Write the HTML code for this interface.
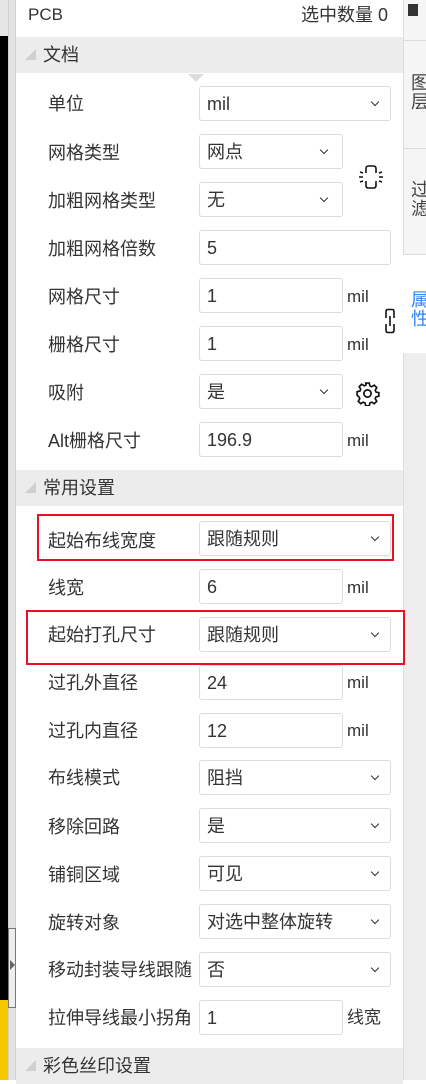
<!DOCTYPE html>
<html><head><meta charset="utf-8"><style>
*{margin:0;padding:0;box-sizing:border-box}
body{width:426px;height:1080px;overflow:hidden;background:#fff;font-family:"Liberation Sans","Noto Sans CJK SC",sans-serif;color:#333;font-size:18px;position:relative}
.a{position:absolute}
.lbl{position:absolute;left:48px;line-height:22px;white-space:nowrap}
.box{position:absolute;left:199px;height:35px;border:1px solid #dcdcdc;border-radius:3px;background:#fff;padding-left:7px;line-height:35px;white-space:nowrap}
.full{width:192px}.short{width:144px}
.chev{position:absolute;right:12px;top:12px;width:6px;height:6px;border-right:1.5px solid #333;border-bottom:1.5px solid #333;transform:rotate(45deg)}
.short .chev{right:15px}
.unit{position:absolute;left:347px;line-height:22px;font-size:17px}
.sec{position:absolute;left:16px;width:387px;height:36px;background:#ececec;line-height:36px;padding-left:27px}
.tri{position:absolute;left:9px;top:12px;width:0;height:0;border-left:11px solid transparent;border-bottom:11px solid #d0d0d0}
</style></head><body>
<div class="a" style="left:0;top:0;width:8px;height:36px;background:#e6e6e6"></div>
<div class="a" style="left:0;top:36px;width:8px;height:964px;background:#000"></div>
<div class="a" style="left:0;top:1000px;width:8px;height:80px;background:#f6c800"></div>
<div class="a" style="left:8px;top:0;width:8px;height:1080px;background:#e4e4e4;border-left:1px solid #d0d0d0;border-right:1px solid #d0d0d0"></div>
<div class="a" style="left:8px;top:928px;width:8px;height:80px;border:1px solid #777;background:#eee"></div>
<div class="a" style="left:10px;top:960px;width:0;height:0;border-top:5px solid transparent;border-bottom:5px solid transparent;border-left:5px solid #666"></div>
<div class="a" style="left:403px;top:0;width:23px;height:255px;background:#f5f5f5;border-left:1px solid #ddd;border-bottom:1px solid #ddd"></div>
<div class="a" style="left:403px;top:40px;width:23px;height:1px;background:#ddd"></div>
<div class="a" style="left:403px;top:148px;width:23px;height:1px;background:#ddd"></div>
<div class="a" style="left:408px;top:4px;width:10px;height:12px;background:#333"></div>
<div class="a" style="left:411px;top:74px;font-size:18px;line-height:19px;color:#444">图<br>层</div>
<div class="a" style="left:411px;top:181px;font-size:18px;line-height:19px;color:#444">过<br>滤</div>
<div class="a" style="left:411px;top:291px;font-size:18px;line-height:19px;color:#2f86f6">属<br>性</div>
<div class="a" style="left:403px;top:353px;width:23px;height:727px;background:#eee;border-left:1px solid #ddd"></div>
<div class="a" style="left:28px;top:4px;line-height:22px;font-size:17px">PCB</div>
<div class="a" style="left:301px;top:4px;line-height:22px">选中数量 0</div>
<div class="sec" style="top:37px"><div class="tri"></div>文档</div>
<div class="a" style="left:188px;top:74px;width:0;height:0;border-left:8px solid transparent;border-right:8px solid transparent;border-top:8px solid #ddd"></div>

<div class="lbl" style="top:93px">单位</div><div class="box full" style="top:86px">mil<i class="chev"></i></div>
<div class="lbl" style="top:142px">网格类型</div><div class="box short" style="top:134px">网点<i class="chev"></i></div>
<div class="lbl" style="top:190px">加粗网格类型</div><div class="box short" style="top:182px">无<i class="chev"></i></div>
<div class="lbl" style="top:238px">加粗网格倍数</div><div class="box full" style="top:230px">5</div>
<div class="lbl" style="top:286px">网格尺寸</div><div class="box short" style="top:278px">1</div><div class="unit" style="top:286px">mil</div>
<div class="lbl" style="top:334px">栅格尺寸</div><div class="box short" style="top:326px">1</div><div class="unit" style="top:334px">mil</div>
<div class="lbl" style="top:382px">吸附</div><div class="box short" style="top:374px">是<i class="chev"></i></div>
<div class="lbl" style="top:430px">Alt栅格尺寸</div><div class="box short" style="top:422px">196.9</div><div class="unit" style="top:430px">mil</div>

<svg class="a" style="left:358px;top:164px" width="26" height="26" viewBox="0 0 26 26" fill="none" stroke="#111" stroke-width="1.6">
<path d="M8 9V4.5Q8 2 10.5 2H15.5Q18 2 18 4.5V9"/><path d="M8 17V21.5Q8 24 10.5 24H15.5Q18 24 18 21.5V17"/>
<path d="M2 8L5 9M1 13H5M2 18L5 17M24 8L21 9M25 13H21M24 18L21 17"/></svg>
<svg class="a" style="left:383px;top:308px" width="14" height="26" viewBox="0 0 14 26" fill="none" stroke="#111" stroke-width="1.6">
<path d="M3 10V3.5Q3 1.5 5 1.5H9Q11 1.5 11 3.5V10"/><path d="M3 16V22.5Q3 24.5 5 24.5H9Q11 24.5 11 22.5V16"/><path d="M7 8V18"/></svg>
<svg class="a" style="left:355px;top:381px" width="25" height="25" viewBox="0 0 24 24" fill="none" stroke="#111" stroke-width="1.6">
<circle cx="12" cy="12" r="3.5"/>
<path d="M10.3 2h3.4l.6 2.7 1.8.8 2.4-1.5 2.4 2.4-1.5 2.4.8 1.8 2.7.6v3.4l-2.7.6-.8 1.8 1.5 2.4-2.4 2.4-2.4-1.5-1.8.8-.6 2.7h-3.4l-.6-2.7-1.8-.8-2.4 1.5-2.4-2.4 1.5-2.4-.8-1.8L2 13.7v-3.4l2.7-.6.8-1.8-1.5-2.4 2.4-2.4 2.4 1.5 1.8-.8z"/></svg>

<div class="sec" style="top:470px"><div class="tri"></div>常用设置</div>
<div class="lbl" style="top:530px">起始布线宽度</div><div class="box full" style="top:521px">跟随规则<i class="chev"></i></div>
<div class="lbl" style="top:577px">线宽</div><div class="box short" style="top:569px">6</div><div class="unit" style="top:577px">mil</div>
<div class="lbl" style="top:624px">起始打孔尺寸</div><div class="box full" style="top:617px">跟随规则<i class="chev"></i></div>
<div class="lbl" style="top:672px">过孔外直径</div><div class="box short" style="top:665px">24</div><div class="unit" style="top:672px">mil</div>
<div class="lbl" style="top:720px">过孔内直径</div><div class="box short" style="top:713px">12</div><div class="unit" style="top:720px">mil</div>
<div class="lbl" style="top:767px">布线模式</div><div class="box full" style="top:760px">阻挡<i class="chev"></i></div>
<div class="lbl" style="top:816px">移除回路</div><div class="box full" style="top:808px">是<i class="chev"></i></div>
<div class="lbl" style="top:864px">铺铜区域</div><div class="box full" style="top:856px">可见<i class="chev"></i></div>
<div class="lbl" style="top:912px">旋转对象</div><div class="box full" style="top:904px">对选中整体旋转<i class="chev"></i></div>
<div class="lbl" style="top:959px">移动封装导线跟随</div><div class="box full" style="top:952px">否<i class="chev"></i></div>
<div class="lbl" style="top:1007px">拉伸导线最小拐角</div><div class="box short" style="top:1000px">1</div><div class="unit" style="top:1007px">线宽</div>

<div class="a" style="left:37px;top:514px;width:357px;height:47px;border:2px solid #e81123"></div>
<div class="a" style="left:26px;top:610px;width:379px;height:55px;border:2px solid #e81123"></div>

<div class="sec" style="top:1048px"><div class="tri"></div>彩色丝印设置</div>
</body></html>
